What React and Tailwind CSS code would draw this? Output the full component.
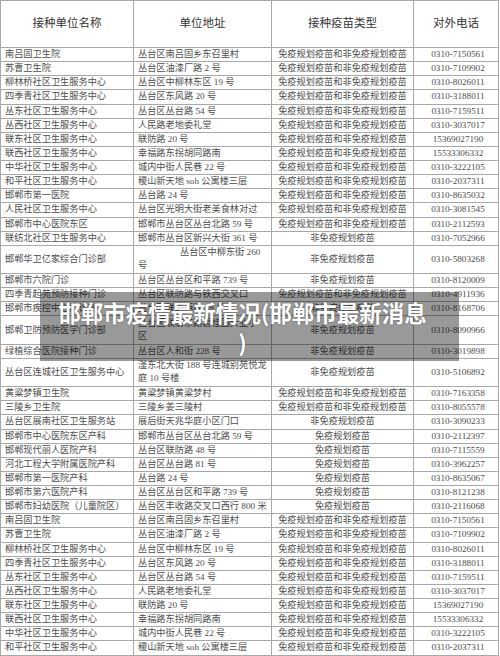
import React from 'react';

const BOTH = '免疫规划疫苗和非免疫规划疫苗';
const NON = '非免疫规划疫苗';
const EPI = '免疫规划疫苗';

const head = [
  ['南吕固卫生院', '丛台区南吕固乡东召里村', BOTH, '0310-7150561'],
  ['苏曹卫生院', '丛台区油漆厂路 2 号', BOTH, '0310-7109902'],
  ['柳林桥社区卫生服务中心', '丛台区中柳林东区 19 号', BOTH, '0310-8026011'],
  ['四季青社区卫生服务中心', '丛台区东风路 20 号', BOTH, '0310-3188011'],
  ['丛东社区卫生服务中心', '丛台区丛台路 54 号', BOTH, '0310-7159511'],
  ['丛西社区卫生服务中心', '人民路老地委礼堂', BOTH, '0310-3037017'],
  ['联东社区卫生服务中心', '联防路 20 号', BOTH, '15369027190'],
  ['联西社区卫生服务中心', '幸福路东拐胡同路南', BOTH, '15533306332'],
  ['中华社区卫生服务中心', '城内中街人民巷 22 号', BOTH, '0310-3222105'],
  ['和平社区卫生服务中心', '稷山新天地 soh 公寓楼三层', BOTH, '0310-2037311'],
];

const rows = [
  ...head,
  ['邯郸市第一医院', '丛台路 24 号', BOTH, '0310-8635032'],
  ['人民社区卫生服务中心', '丛台区光明大街老美食林对过', BOTH, '0310-3081545'],
  ['邯郸市中心医院东区', '邯郸市丛台区丛台北路 59 号', BOTH, '0310-2112593'],
  ['联纺北社区卫生服务中心', '邯郸市丛台区新兴大街 361 号', NON, '0310-7052966'],
  ['邯郸华卫亿家综合门诊部', ['丛台区中柳东街 260', '号'], NON, '0310-5803268', 'indent'],
  ['邯郸市六院门诊', '丛台区丛台区和平路 739 号', NON, '0310-8120009'],
  ['四季青起苑预防接种门诊', '丛台区联防路与铁西交叉口', BOTH, '0310-4911936'],
  ['邯郸市疾控中心门诊部', '丛台区联纺西路 28 号', NON, '0310-8168706'],
  ['邯郸卫防预防医学门诊部', ['丛台区联纺东路碧桂园大业小', '区'], NON, '0310-8090966'],
  ['绿植综合医院接种门诊', '丛台区人和街 228 号', NON, '0310-3019898'],
  ['丛台区连城社区卫生服务中心', ['滏东北大街 188 号连城别苑悦龙', '庭 10 号楼'], NON, '0310-5106892'],
  ['黄粱梦镇卫生院', '黄粱梦镇黄粱梦村', BOTH, '0310-7163358'],
  ['三陵乡卫生院', '三陵乡姜三陵村', BOTH, '0310-8055578'],
  ['丛台区展南社区卫生服务站', '展后街天兆华庭小区门口', NON, '0310-3090233'],
  ['邯郸市中心医院东区产科', '邯郸市丛台区丛台北路 59 号', EPI, '0310-2112397'],
  ['邯郸现代丽人医院产科', '丛台区联防路 48 号', EPI, '0310-7115559'],
  ['河北工程大学附属医院产科', '丛台区丛台路 81 号', EPI, '0310-3962257'],
  ['邯郸市第一医院产科', '丛台路 24 号', EPI, '0310-8635067'],
  ['邯郸市第六医院产科', '丛台区丛台区和平路 739 号', EPI, '0310-8121238'],
  ['邯郸市妇幼医院（儿童院区）', '丛台区丰收路交叉口西行 800 米', EPI, '0310-2116068'],
  ...head,
  ['邯郸市第一医院', '丛台路 24 号', BOTH, '0310-8635032'],
];

const cell = 'border border-[#a8a8a8] p-0 whitespace-nowrap';

export default function App() {
  return (
    <div
      className="relative w-[500px] h-[656px] overflow-hidden bg-white text-[#4d4d4d]"
      style={{ fontFamily: '"Liberation Serif", "Noto Sans CJK SC", serif' }}
    >
      <table className="w-[498px] table-fixed border-collapse">
        <colgroup>
          <col className="w-[133px]" />
          <col className="w-[138px]" />
          <col className="w-[142px]" />
          <col className="w-[85px]" />
        </colgroup>
        <thead>
          <tr className="h-[47px] text-[11.5px] text-[#333]">
            <th className={`${cell} font-normal`}>接种单位名称</th>
            <th className={`${cell} font-normal`}>单位地址</th>
            <th className={`${cell} font-normal`}>接种疫苗类型</th>
            <th className={`${cell} font-normal`}>对外电话</th>
          </tr>
        </thead>
        <tbody className="text-[9.2px] leading-[11px]">
          {rows.map((r, i) => {
            const tall = Array.isArray(r[1]);
            return (
              <tr key={i} className={tall ? 'h-[28.3px]' : 'h-[14.14px]'}>
                <td className={`${cell} pl-[4px]`}>{r[0]}</td>
                <td className={`${cell} pl-[4px]`}>
                  {tall ? (
                    <div className="leading-[13px]">
                      <div className={r[4] ? 'pl-[42px]' : ''}>{r[1][0]}</div>
                      <div>{r[1][1]}</div>
                    </div>
                  ) : (
                    r[1]
                  )}
                </td>
                <td className={`${cell} text-center`}>{r[2]}</td>
                <td className={`${cell} text-center pl-[4px]`}>{r[3]}</td>
              </tr>
            );
          })}
        </tbody>
      </table>

      <div className="absolute left-[40px] top-[292px] w-[419px] h-[69px] bg-black/40 flex items-center justify-center pr-[14px]">
        <div
          className="text-center text-white font-bold text-[22.5px] leading-[30px] [text-shadow:0_0_2px_rgba(0,0,0,0.4)]"
          style={{ fontFamily: '"Noto Sans CJK SC", sans-serif' }}
        >
          邯郸市疫情最新情况(邯郸市最新消息
          <br />)
        </div>
      </div>
    </div>
  );
}
